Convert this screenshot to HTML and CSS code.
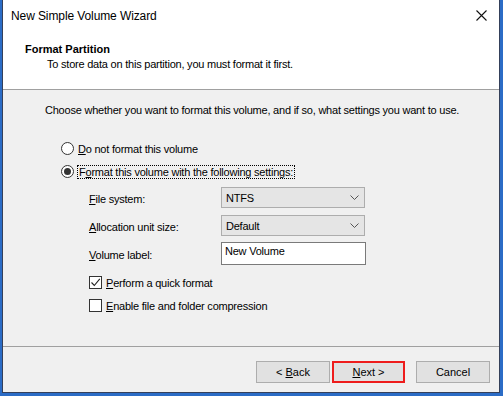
FILE: index.html
```html
<!DOCTYPE html>
<html lang="en">
<head>
  <meta charset="UTF-8">
  <title>New Simple Volume Wizard</title>
  <link rel="stylesheet" href="styles.css">
</head>
<body>
  <div class="window">
    <!-- title bar -->
    <div class="titlebar">
      <span class="title">New Simple Volume Wizard</span>
      <svg class="close" width="11" height="11" viewBox="0 0 11 11">
        <path d="M0.5 0.5 L10.5 10.5 M10.5 0.5 L0.5 10.5" stroke="#111" stroke-width="1.1" fill="none"/>
      </svg>
    </div>

    <!-- page header -->
    <div class="header">
      <div class="header-title">Format Partition</div>
      <div class="header-sub">To store data on this partition, you must format it first.</div>
    </div>

    <div class="content">
      <p class="intro">Choose whether you want to format this volume, and if so, what settings you want to use.</p>

      <div class="radios">
        <label class="radio-row">
          <span class="radio"></span>
          <span><u>D</u>o not format this volume</span>
        </label>
        <label class="radio-row">
          <span class="radio checked"></span>
          <span class="focus">F<u>o</u>rmat this volume with the following settings:</span>
        </label>
      </div>

      <div class="settings">
        <span class="label"><u>F</u>ile system:</span>
        <div class="select">NTFS<svg class="chev" width="9" height="5" viewBox="0 0 9 5"><path d="M0.5 0.5 L4.5 4.5 L8.5 0.5" stroke="#555" fill="none"/></svg></div>

        <span class="label row2"><u>A</u>llocation unit size:</span>
        <div class="select row2">Default<svg class="chev" width="9" height="5" viewBox="0 0 9 5"><path d="M0.5 0.5 L4.5 4.5 L8.5 0.5" stroke="#555" fill="none"/></svg></div>

        <span class="label row3"><u>V</u>olume label:</span>
        <div class="textbox row3">New Volume</div>
      </div>

      <div class="checks">
        <label class="check-row">
          <span class="checkbox">
            <svg width="11" height="11" viewBox="0 0 11 11"><path d="M1.5 5.5 L4.3 8.5 L9.8 1.8" stroke="#222" stroke-width="1.1" fill="none"/></svg>
          </span>
          <span><u>P</u>erform a quick format</span>
        </label>
        <label class="check-row">
          <span class="checkbox"></span>
          <span><u>E</u>nable file and folder compression</span>
        </label>
      </div>
    </div>

    <div class="footer">
      <button class="btn">&lt; <u>B</u>ack</button>
      <button class="btn btn-next"><u>N</u>ext &gt;</button>
      <button class="btn btn-cancel">Cancel</button>
    </div>
  </div>
</body>
</html>
```

FILE: styles.css
```css
body {
  margin: 0;
  height: 396px;
  overflow: hidden;
  background: #2b6cc6;
  font-family: "Liberation Sans", Arial, sans-serif;
  font-size: 11px;
  letter-spacing: -0.22px;
  color: #000;
}
.window {
  box-sizing: border-box;
  margin-left: 2px;
  width: 498px;
  height: 393px;
  background: #f0f0f0;
  border: 1px solid #34405a;
  border-top: none;
  display: flex;
  flex-direction: column;
}
.titlebar {
  height: 31px;
  background: #fff;
  display: flex;
  align-items: center;
  justify-content: space-between;
  padding: 0 10px 0 8px;
}
.title {
  font-size: 12px;
  letter-spacing: -0.1px;
  padding-top: 1px;
}
.close { margin-right: 2px; }
.header {
  height: 59px;
  background: #fff;
  border-bottom: 1px solid #a0a0a0;
  padding-left: 22px;
  box-sizing: border-box;
}
.header-title {
  font-weight: bold;
  letter-spacing: 0;
  margin-top: 11px;
  line-height: 14px;
}
.header-sub {
  margin-left: 22px;
  margin-top: 1px;
  line-height: 14px;
}
.content {
  flex: 1;
  padding: 14px 0 0 42px;
  border-bottom: 1px solid #a0a0a0;
}
.intro {
  margin: 0;
  line-height: 13px;
}
.radios {
  margin: 20px 0 0 16px;
}
.radio-row, .check-row {
  display: flex;
  align-items: center;
  height: 23px;
  gap: 4px;
}
.radio {
  box-sizing: border-box;
  width: 13px;
  height: 13px;
  border: 1px solid #333;
  border-radius: 50%;
  background: #fff;
  display: flex;
  align-items: center;
  justify-content: center;
}
.radio.checked::after {
  content: "";
  width: 7px;
  height: 7px;
  border-radius: 50%;
  background: #333;
}
.focus {
  outline: 1px dotted #000;
  outline-offset: 0;
  padding: 0 1px;
  line-height: 12px;
}
.settings {
  display: grid;
  grid-template-columns: 132px 144px;
  grid-template-rows: 21px 21px 23px;
  row-gap: 7px;
  margin: 4px 0 0 44px;
  align-items: center;
}
.settings .row3 { margin-top: -2px; }
.label { padding-top: 2px; }
.select {
  box-sizing: border-box;
  height: 21px;
  background: #e5e5e5;
  border: 1px solid #adadad;
  display: flex;
  align-items: center;
  justify-content: space-between;
  padding: 0 5px 0 4px;
}
.textbox {
  box-sizing: border-box;
  height: 23px;
  background: #fff;
  border: 1px solid #7a7a7a;
  padding: 2px 3px;
  width: 145px;
}
.checks {
  margin: 5px 0 0 44px;
}
.checkbox {
  box-sizing: border-box;
  width: 13px;
  height: 13px;
  border: 1px solid #333;
  background: #fff;
  display: flex;
  align-items: center;
  justify-content: center;
}
.footer {
  height: 45px;
  display: flex;
  align-items: flex-start;
  justify-content: flex-end;
  padding: 14px 9px 0 0;
  box-sizing: border-box;
}
.btn {
  box-sizing: border-box;
  width: 74px;
  height: 22px;
  background: #e1e1e1;
  border: 1px solid #adadad;
  font-family: "Liberation Sans", Arial, sans-serif;
  font-size: 11px;
  color: #000;
  padding: 0;
}
.btn-next {
  margin-left: 2px;
  border: 2px solid #ee1d1d;
  width: 73px;
}
.btn-cancel { margin-left: 11px; }
```
